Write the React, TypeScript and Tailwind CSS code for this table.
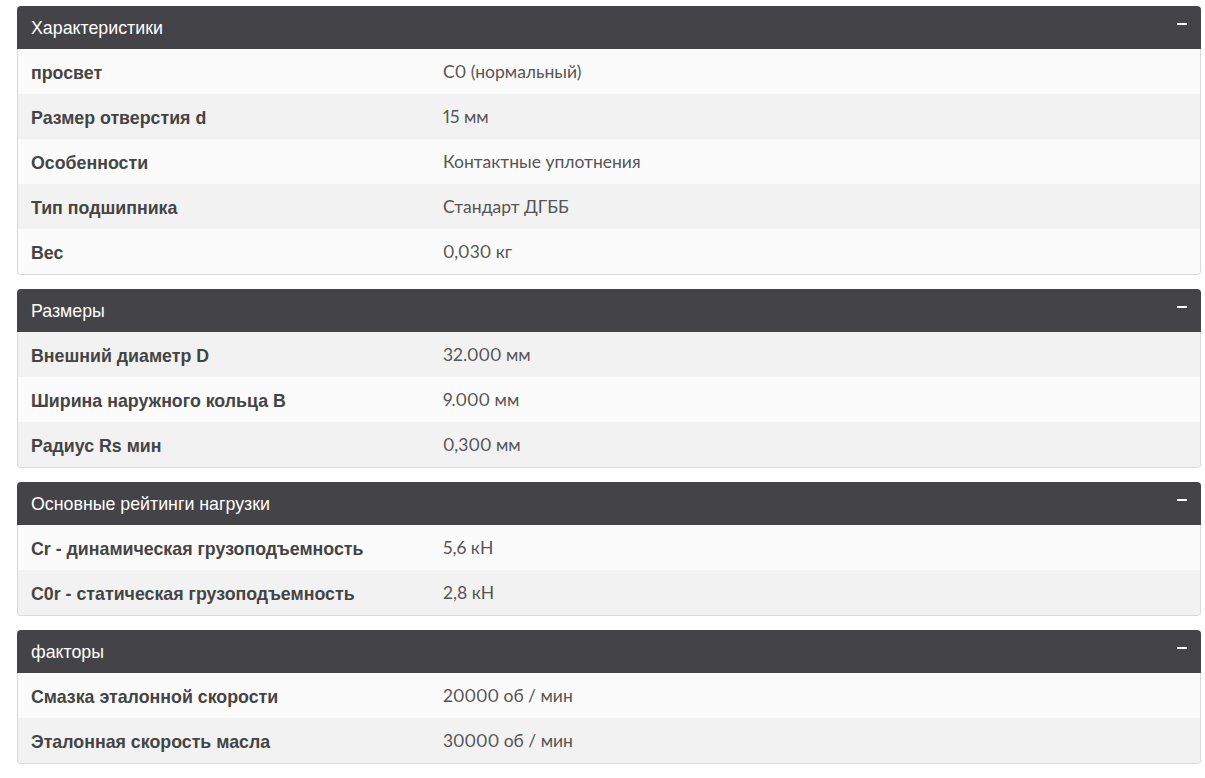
import React from 'react';

interface Row {
  label: string;
  value: string;
}

interface Section {
  title: string;
  rows: Row[];
}

const sections: Section[] = [
  {
    title: 'Характеристики',
    rows: [
      { label: 'просвет', value: 'С0 (нормальный)' },
      { label: 'Размер отверстия d', value: '15 мм' },
      { label: 'Особенности', value: 'Контактные уплотнения' },
      { label: 'Тип подшипника', value: 'Стандарт ДГББ' },
      { label: 'Вес', value: '0,030 кг' },
    ],
  },
  {
    title: 'Размеры',
    rows: [
      { label: 'Внешний диаметр D', value: '32.000 мм' },
      { label: 'Ширина наружного кольца B', value: '9.000 мм' },
      { label: 'Радиус Rs мин', value: '0,300 мм' },
    ],
  },
  {
    title: 'Основные рейтинги нагрузки',
    rows: [
      { label: 'Cr - динамическая грузоподъемность', value: '5,6 кН' },
      { label: 'C0r - статическая грузоподъемность', value: '2,8 кН' },
    ],
  },
  {
    title: 'факторы',
    rows: [
      { label: 'Смазка эталонной скорости', value: '20000 об / мин' },
      { label: 'Эталонная скорость масла', value: '30000 об / мин' },
    ],
  },
];

export default function App() {
  // striping runs on through all panels, like one long table
  let rowIdx = 0;

  return (
    <div className="min-h-[778px] bg-white pt-[6px] pl-[17px]">
      <div className="w-[1184px]">
        {sections.map((section) => (
          <div key={section.title} className="mb-[14px]">
            {/* Header */}
            <div className="flex h-[43px] items-center justify-between rounded-t-[4px] bg-[#444348] pl-[14px] pr-[14px]">
              <span className="pt-[1px] font-['Liberation_Sans',Arial,sans-serif] text-[17.8px] text-white">
                {section.title}
              </span>
              <span className="mb-[8px] block h-[2px] w-[10px] bg-white" />
            </div>

            {/* Rows */}
            <div className="overflow-hidden rounded-b-[4px] border-x border-b border-[#d9d9d9]">
              {section.rows.map((row) => {
                const odd = rowIdx++ % 2 === 0;
                return (
                  <div
                    key={row.label}
                    className={`flex h-[45px] items-center ${odd ? 'bg-[#fbfbfb]' : 'bg-[#f2f2f2]'}`}
                  >
                    <div className="w-[425px] pt-[3px] pl-[13px] font-['Liberation_Sans',Arial,sans-serif] text-[17.8px] font-bold text-[#444444]">
                      {row.label}
                    </div>
                    <div className="pt-[2px] font-['Lato',sans-serif] text-[17.5px] text-[#555555] proportional-nums">
                      {row.value}
                    </div>
                  </div>
                );
              })}
            </div>
          </div>
        ))}
      </div>
    </div>
  );
}
